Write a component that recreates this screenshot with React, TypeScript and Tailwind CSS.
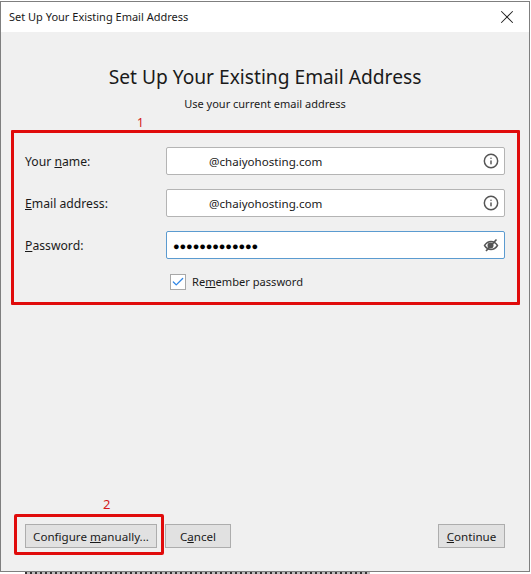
import { Check, Info, X } from "lucide-react";

const font = "font-['Noto_Sans','Open_Sans',sans-serif]";

function Field({ label, under, rest, children }: { label?: string; under: string; rest: string; children: React.ReactNode }) {
  return (
    <div className="flex items-center">
      <label className="w-[141px] pt-[2px] text-[12.2px] text-[#1a1a1a]">
        {label}
        <u>{under}</u>
        {rest}
      </label>
      {children}
    </div>
  );
}

function Input({ icon, children, focused }: { icon: React.ReactNode; children: React.ReactNode; focused?: boolean }) {
  return (
    <div className={`w-[339px] h-[28px] flex items-center justify-between bg-white rounded-[2px] border pr-[5px] ${focused ? "border-[#5b9bd0]" : "border-[#b4b4b4]"}`}>
      {children}
      {icon}
    </div>
  );
}

function Button({ className, children }: { className: string; children: React.ReactNode }) {
  return (
    <button className={`h-[24px] pt-[2px] flex items-center justify-center bg-[#e1e1e1] border border-[#adadad] text-[11.6px] text-[#1a1a1a] ${className}`}>
      {children}
    </button>
  );
}

function EyeSlash() {
  return (
    <svg viewBox="0 0 16 16" className="w-[16px] h-[16px] text-[#555]" fill="none" stroke="currentColor">
      <path d="M1.5 8.5C3.5 5.5 5.5 4.5 8 4.5s4.5 1 6.5 4c-2 3-4 4-6.5 4s-4.5-1-6.5-4Z" strokeWidth="1.4" />
      <circle cx="7.5" cy="8.5" r="3" fill="currentColor" stroke="none" />
      <path d="M3 14 13.5 2.5" strokeWidth="1.7" />
    </svg>
  );
}

export default function App() {
  const info = <Info className="w-[16px] h-[16px] text-[#555]" strokeWidth={2.2} />;
  return (
    <div className={`w-[531px] h-[574px] relative bg-white overflow-hidden ${font}`}>
      {/* Dialog window */}
      <div className="mt-px w-[530px] h-[571px] flex flex-col bg-[#f0f0f0] border border-[#7f7f7f]">
        <div className="h-[30px] flex items-center justify-between bg-white pl-2 pr-[11px] text-[11px] text-[#1a1a1a] shrink-0">
          <span>Set Up Your Existing Email Address</span>
          <X className="w-[22px] h-[22px] text-[#222]" strokeWidth={1.1} />
        </div>

        <h1 className="mt-[31px] text-center text-[19.2px] leading-[28px] text-[#1a1a1a]">Set Up Your Existing Email Address</h1>
        <p className="mt-[4px] text-center text-[11px] leading-[17px] text-[#1a1a1a]">Use your current email address</p>

        {/* Form */}
        <div className="mt-[35px] ml-[24px] flex flex-col gap-[14px]">
          <Field under="n" label="Your " rest="ame:">
            <Input icon={info}>
              <span className="pl-[42px] pt-px text-[11.6px] text-[#1a1a1a]">@chaiyohosting.com</span>
            </Input>
          </Field>
          <Field under="E" rest="mail address:">
            <Input icon={info}>
              <span className="pl-[42px] pt-px text-[11.6px] text-[#1a1a1a]">@chaiyohosting.com</span>
            </Input>
          </Field>
          <Field under="P" rest="assword:">
            <Input focused icon={<EyeSlash />}>
              <span className="pl-[6px] pt-[2px] text-[11px] tracking-[-0.1px] text-black">●●●●●●●●●●●●●</span>
            </Input>
          </Field>
        </div>

        <div className="mt-[15px] ml-[169px] flex items-center gap-[6px] text-[11.1px] text-[#1a1a1a]">
          <span className="w-[16px] h-[16px] flex items-center justify-center border border-[#a8a8a8] bg-white">
            <Check className="w-[14px] h-[14px] text-[#2f86e6]" strokeWidth={2.2} />
          </span>
          <span>
            Re<u>m</u>ember password
          </span>
        </div>

        {/* Footer buttons */}
        <div className="mt-auto mb-[23px] flex pl-[24px] pr-[24px]">
          <Button className="w-[132px]">
            Configure&nbsp;<u>m</u>anually...
          </Button>
          <Button className="ml-[8px] w-[66px]">
            C<u>a</u>ncel
          </Button>
          <Button className="ml-auto w-[67px]">
            <u>C</u>ontinue
          </Button>
        </div>
      </div>
      {/* cut-off page text under the window */}
      <div className="ml-[25px] w-[345px] h-[2px] bg-[repeating-linear-gradient(90deg,#333_0_2px,#bbb_2px_5px)]" />

      {/* Red annotations over the screenshot */}
      <div className="absolute left-[11px] top-[130px] w-[509px] h-[175px] border-[3px] border-[#e00b0b] rounded-[1px]" />
      <span className="absolute left-[137px] top-[115px] text-[12px] leading-[16px] text-[#d41a1a]">1</span>
      <div className="absolute left-[14px] top-[514px] w-[150px] h-[41px] border-[3px] border-[#e00b0b] rounded-[2px]" />
      <span className="absolute left-[103px] top-[495px] text-[13px] leading-[18px] text-[#d41a1a]">2</span>
    </div>
  );
}
